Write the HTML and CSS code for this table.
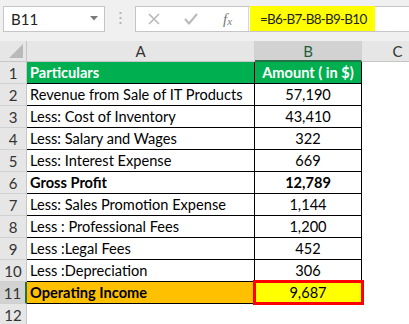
FILE: index.html
```html
<!DOCTYPE html>
<html>
<head>
<meta charset="utf-8">
<link rel="stylesheet" href="styles.css">
</head>
<body>
<div class="toolbar">
  <div class="namebox">
    <span class="nb-text">B11</span>
    <svg class="nb-arrow" width="8" height="5" viewBox="0 0 8 5"><path d="M0 0H8L4 4.5Z" fill="#7a7a7a"/></svg>
  </div>
  <div class="sep">
    <svg width="3" height="14" viewBox="0 0 3 14"><rect x="0.5" y="0" width="2" height="2" fill="#b5b5b5"/><rect x="0.5" y="5" width="2" height="2" fill="#b5b5b5"/><rect x="0.5" y="10" width="2" height="2" fill="#b5b5b5"/></svg>
  </div>
  <div class="fbar">
    <div class="ficons">
      <svg class="ic-x" width="12" height="12" viewBox="0 0 12 12"><path d="M1 1L11 11M11 1L1 11" stroke="#b8b8b8" stroke-width="1.6"/></svg>
      <svg class="ic-ok" width="14" height="12" viewBox="0 0 14 12"><path d="M1 6L5 10.5L13 1" stroke="#b8b8b8" stroke-width="2" fill="none"/></svg>
      <span class="fx">f<sub>x</sub></span>
    </div>
    <div class="formula"><span class="hl">=B6-B7-B8-B9-B10</span></div>
  </div>
</div>
<div class="sheet">
  <div class="row hdr">
    <div class="rh corner"><svg width="14" height="14" viewBox="0 0 14 14"><path d="M14 0V14H0Z" fill="#b9b9b9"/></svg></div>
    <div class="ch ch-a">A</div>
    <div class="ch ch-b sel">B</div>
    <div class="ch ch-c">C</div>
  </div>
  <div class="row">
    <div class="rh">1</div>
    <div class="ca green bold">Particulars</div>
    <div class="cb green bold">Amount ( in $)</div>
    <div class="cc"></div>
  </div>
  <div class="row">
    <div class="rh">2</div>
    <div class="ca">Revenue from Sale of IT Products</div>
    <div class="cb">57,190</div>
    <div class="cc"></div>
  </div>
  <div class="row">
    <div class="rh">3</div>
    <div class="ca">Less: Cost of Inventory</div>
    <div class="cb">43,410</div>
    <div class="cc"></div>
  </div>
  <div class="row">
    <div class="rh">4</div>
    <div class="ca">Less: Salary and Wages</div>
    <div class="cb">322</div>
    <div class="cc"></div>
  </div>
  <div class="row">
    <div class="rh">5</div>
    <div class="ca">Less: Interest Expense</div>
    <div class="cb">669</div>
    <div class="cc"></div>
  </div>
  <div class="row">
    <div class="rh">6</div>
    <div class="ca bold">Gross Profit</div>
    <div class="cb bold">12,789</div>
    <div class="cc"></div>
  </div>
  <div class="row">
    <div class="rh">7</div>
    <div class="ca">Less: Sales Promotion Expense</div>
    <div class="cb">1,144</div>
    <div class="cc"></div>
  </div>
  <div class="row">
    <div class="rh">8</div>
    <div class="ca">Less : Professional Fees</div>
    <div class="cb">1,200</div>
    <div class="cc"></div>
  </div>
  <div class="row">
    <div class="rh">9</div>
    <div class="ca">Less :Legal Fees</div>
    <div class="cb">452</div>
    <div class="cc"></div>
  </div>
  <div class="row">
    <div class="rh">10</div>
    <div class="ca">Less :Depreciation</div>
    <div class="cb">306</div>
    <div class="cc"></div>
  </div>
  <div class="row">
    <div class="rh rsel">11</div>
    <div class="ca orange bold">Operating Income</div>
    <div class="cb yellow active">9,687</div>
    <div class="cc"></div>
  </div>
  <div class="row last">
    <div class="rh">12</div>
    <div class="ca blank"></div>
    <div class="cb blank"></div>
    <div class="cc"></div>
  </div>
</div>
</body>
</html>
```
FILE: styles.css
```css
* { box-sizing: border-box; }
html, body { margin: 0; padding: 0; }
body {
  width: 409px;
  height: 324px;
  overflow: hidden;
  background: #ffffff;
  font-family: "Lato", "Liberation Sans", sans-serif;
  color: #000;
}
.toolbar {
  height: 41px;
  background: #f0f0f0;
  display: flex;
  align-items: flex-start;
  padding: 6px 0 0 3px;
}
.namebox {
  width: 102px;
  height: 26px;
  background: #fff;
  border: 1px solid #c6c6c6;
  display: flex;
  align-items: center;
  justify-content: space-between;
  padding: 0 6px 0 7px;
  font-size: 15px;
  color: #222;
}
.nb-arrow { margin-top: -2px; }
.sep {
  width: 30px;
  height: 26px;
  display: flex;
  align-items: center;
  justify-content: center;
}
.fbar {
  flex: 1;
  height: 26px;
  background: #fff;
  border: 1px solid #c6c6c6;
  border-right: none;
  display: flex;
}
.ficons {
  width: 113px;
  border-right: 1px solid #d6d6d6;
  display: flex;
  align-items: center;
  padding-left: 12px;
}
.ic-x { margin-right: 24px; }
.ic-ok { margin-right: 25px; }
.fx {
  font-family: "Liberation Serif", serif;
  font-style: italic;
  font-size: 15px;
  color: #777;
}
.fx sub { font-size: 11px; vertical-align: -1px; }
.formula {
  flex: 1;
  display: flex;
  padding-left: 1px;
}
.hl {
  background: #ffff00;
  width: 125px;
  height: 25px;
  display: flex;
  align-items: center;
  padding-left: 10px;
  font-size: 13.5px;
  letter-spacing: -0.75px;
  color: #222;
  margin-top: -1px;
  white-space: nowrap;
}
.sheet { display: flex; flex-direction: column; }
.row { display: flex; height: 22px; }
.row.hdr { height: 21px; }
.rh {
  width: 27px;
  flex: none;
  background: #e6e6e6;
  border-bottom: 1px solid #d0d0d0;
  border-right: 1px solid #c6c6c6;
  display: flex;
  align-items: center;
  justify-content: center;
  font-size: 15px;
  color: #333;
}
.rh.rsel {
  background: #d2d2d2;
  border-right: 2px solid #217346;
}
.corner {
  align-items: flex-end;
  justify-content: flex-end;
  padding: 0 3px 3px 0;
  border-bottom: 1px solid #c6c6c6;
}
.ch {
  background: #e6e6e6;
  border-bottom: 1px solid #c6c6c6;
  border-right: 1px solid #d0d0d0;
  display: flex;
  align-items: center;
  justify-content: center;
  font-size: 15px;
  color: #333;
}
.ch-a { width: 228px; }
.ch-b { width: 107px; }
.ch-c { flex: 1; padding-left: 24px; border-right: none; }
.ch.sel {
  background: #d2d2d2;
  border-bottom: 2px solid #217346;
  color: #1f5e3a;
}
.ca {
  width: 228px;
  flex: none;
  border-bottom: 1px solid #000;
  border-right: 1px solid #000;
  display: flex;
  align-items: center;
  padding-left: 3px;
  font-size: 14.6px;
  white-space: nowrap;
}
.cb {
  width: 107px;
  flex: none;
  border-bottom: 1px solid #000;
  border-right: 1px solid #000;
  display: flex;
  align-items: center;
  justify-content: center;
  font-size: 14.6px;
  white-space: nowrap;
}
.cc { flex: 1; }
.bold { font-weight: bold; }
.green { background: #00b050; color: #fff; }
.orange { background: #ffc000; }
.yellow { background: #ffff00; }
.active { position: relative; }
.active::after {
  content: "";
  position: absolute;
  left: -2px;
  top: -2px;
  right: -3px;
  bottom: -2px;
  border: 3px solid #ff0000;
}
.blank { border: none; }
```
